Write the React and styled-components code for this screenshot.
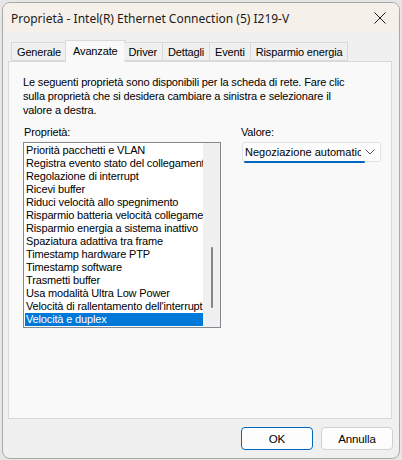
import styled, { createGlobalStyle } from 'styled-components';

const GlobalStyle = createGlobalStyle`
  body {
    margin: 0;
    background: #e6e6e6;
    font-family: 'Liberation Sans', Arial, sans-serif;
  }
`;

const tabs = ['Generale', 'Avanzate', 'Driver', 'Dettagli', 'Eventi', 'Risparmio energia'];

const properties = [
  'Priorità pacchetti e VLAN',
  'Registra evento stato del collegamento',
  'Regolazione di interrupt',
  'Ricevi buffer',
  'Riduci velocità allo spegnimento',
  'Risparmio batteria velocità collegamento',
  'Risparmio energia a sistema inattivo',
  'Spaziatura adattiva tra frame',
  'Timestamp hardware PTP',
  'Timestamp software',
  'Trasmetti buffer',
  'Usa modalità Ultra Low Power',
  "Velocità di rallentamento dell'interrupt",
  'Velocità e duplex',
];

const App = () => (
  <>
    <GlobalStyle />
    <Window>
      <TitleBar>
        <Title>Proprietà - Intel(R) Ethernet Connection (5) I219-V</Title>
        <CloseButton>
          <svg width="12" height="12" viewBox="0 0 12 12">
            <path d="M0.5 0.5 L11.5 11.5 M11.5 0.5 L0.5 11.5" stroke="#1a1a1a" strokeWidth="1" />
          </svg>
        </CloseButton>
      </TitleBar>
      <Body>
        <TabStrip>
          {tabs.map((t) => (
            <Tab key={t} $active={t === 'Avanzate'}>
              {t}
            </Tab>
          ))}
        </TabStrip>
        <Panel>
          <Description>
            Le seguenti proprietà sono disponibili per la scheda di rete. Fare clic
            <br />
            sulla proprietà che si desidera cambiare a sinistra e selezionare il
            <br />
            valore a destra.
          </Description>
          <Columns>
            <Column>
              <Label>Proprietà:</Label>
              <ListBox>
                <Items>
                  {properties.map((p, i) => (
                    <Item key={p} $selected={i === properties.length - 1}>
                      {p}
                    </Item>
                  ))}
                </Items>
                <ScrollTrack>
                  <ScrollThumb />
                </ScrollTrack>
              </ListBox>
            </Column>
            <Column>
              <Label>Valore:</Label>
              <Select>
                <SelectText>Negoziazione automatica</SelectText>
                <svg width="10" height="6" viewBox="0 0 10 6">
                  <path d="M0.5 0.5 L5 5 L9.5 0.5" fill="none" stroke="#5a5a5a" strokeWidth="1" />
                </svg>
              </Select>
            </Column>
          </Columns>
        </Panel>
        <Footer>
          <Button $primary>OK</Button>
          <Button>Annulla</Button>
        </Footer>
      </Body>
    </Window>
  </>
);

export default App;

const Window = styled.div`
  box-sizing: border-box;
  width: 398px;
  height: 457px;
  margin: 2px 0 0 2px;
  border: 1px solid #a8a8a8;
  border-radius: 8px;
  background: #f0f0f0;
  overflow: hidden;
  display: flex;
  flex-direction: column;
`;

const TitleBar = styled.div`
  height: 30px;
  flex-shrink: 0;
  background: #f6f0eb;
  display: flex;
  align-items: center;
  justify-content: space-between;
  padding: 0 13px 0 8px;
`;

const Title = styled.div`
  font-family: 'Segoe UI', 'Noto Sans', sans-serif;
  font-size: 12px;
  color: #1a1a1a;
`;

const CloseButton = styled.div`
  display: flex;
  align-items: center;
`;

const Body = styled.div`
  flex: 1;
  display: flex;
  flex-direction: column;
  padding: 0 7px 0 5px;
  font-size: 11px;
  letter-spacing: -0.15px;
  color: #000;
`;

const TabStrip = styled.div`
  display: flex;
  align-items: flex-end;
  height: 28px;
  padding-left: 3px;
  position: relative;
  z-index: 1;
`;

const Tab = styled.div`
  box-sizing: border-box;
  height: ${(p) => (p.$active ? '22px' : '19px')};
  margin: ${(p) => (p.$active ? '0 -2px -1px' : '0')};
  padding: ${(p) => (p.$active ? '3px 7px 0' : '2px 5px 0')};
  border: 1px solid #d9d9d9;
  border-left-width: ${(p) => (p.$active ? '1px' : '0')};
  border-bottom: ${(p) => (p.$active ? 'none' : '1px solid #d9d9d9')};
  background: ${(p) => (p.$active ? '#f9f9f9' : '#f0f0f0')};
  white-space: nowrap;
  line-height: 14px;

  &:first-child {
    border-left-width: 1px;
  }
`;

const Panel = styled.div`
  box-sizing: border-box;
  height: 358px;
  border: 1px solid #d9d9d9;
  background: #f9f9f9;
  padding: 13px 14px;
`;

const Description = styled.div`
  line-height: 14px;
`;

const Columns = styled.div`
  display: flex;
  gap: 19px;
  margin-top: 8px;
`;

const Column = styled.div`
  display: flex;
  flex-direction: column;
  gap: 3px;
`;

const Label = styled.div`
  line-height: 14px;
  padding-left: 1px;
`;

const ListBox = styled.div`
  box-sizing: border-box;
  width: 198px;
  height: 186px;
  border: 1px solid #828790;
  background: #fff;
  display: flex;
  padding: 1px 0 1px 1px;
`;

const Items = styled.div`
  flex: 1;
  overflow: hidden;
`;

const Item = styled.div`
  height: 13px;
  line-height: 13px;
  padding-left: 1px;
  white-space: nowrap;
  overflow: hidden;
  background: ${(p) => (p.$selected ? '#0078d7' : 'transparent')};
  color: ${(p) => (p.$selected ? '#fff' : '#000')};
`;

const ScrollTrack = styled.div`
  width: 17px;
  margin: -1px 0 -1px;
  background: #f0f0f0;
  display: flex;
  justify-content: center;
  padding-top: 104px;
`;

const ScrollThumb = styled.div`
  width: 2px;
  height: 61px;
  border-radius: 1px;
  background: #858585;
`;

const Select = styled.div`
  box-sizing: border-box;
  position: relative;
  width: 139px;
  height: 20px;
  margin-left: 2px;
  border: 1px solid #e3e3e3;
  border-radius: 3px;
  background: #fdfdfd;
  display: flex;
  align-items: center;
  gap: 4px;
  padding: 0 5px 0 2px;

  &::after {
    content: '';
    position: absolute;
    left: 1px;
    bottom: -2px;
    width: 121px;
    height: 2px;
    border-radius: 1px;
    background: #0067c0;
  }
`;

const SelectText = styled.div`
  flex: 1;
  white-space: nowrap;
  overflow: hidden;
  font-size: 11px;
  letter-spacing: 0;
`;

const Footer = styled.div`
  display: flex;
  justify-content: flex-end;
  gap: 8px;
  padding: 8px 0 0;
  margin-right: -1px;
`;

const Button = styled.div`
  box-sizing: border-box;
  width: 72px;
  height: 23px;
  border: 1px solid ${(p) => (p.$primary ? '#0067c0' : '#d0d0d0')};
  border-radius: 4px;
  background: #fdfdfd;
  display: flex;
  align-items: center;
  justify-content: center;
  font-size: 11.5px;
`;
